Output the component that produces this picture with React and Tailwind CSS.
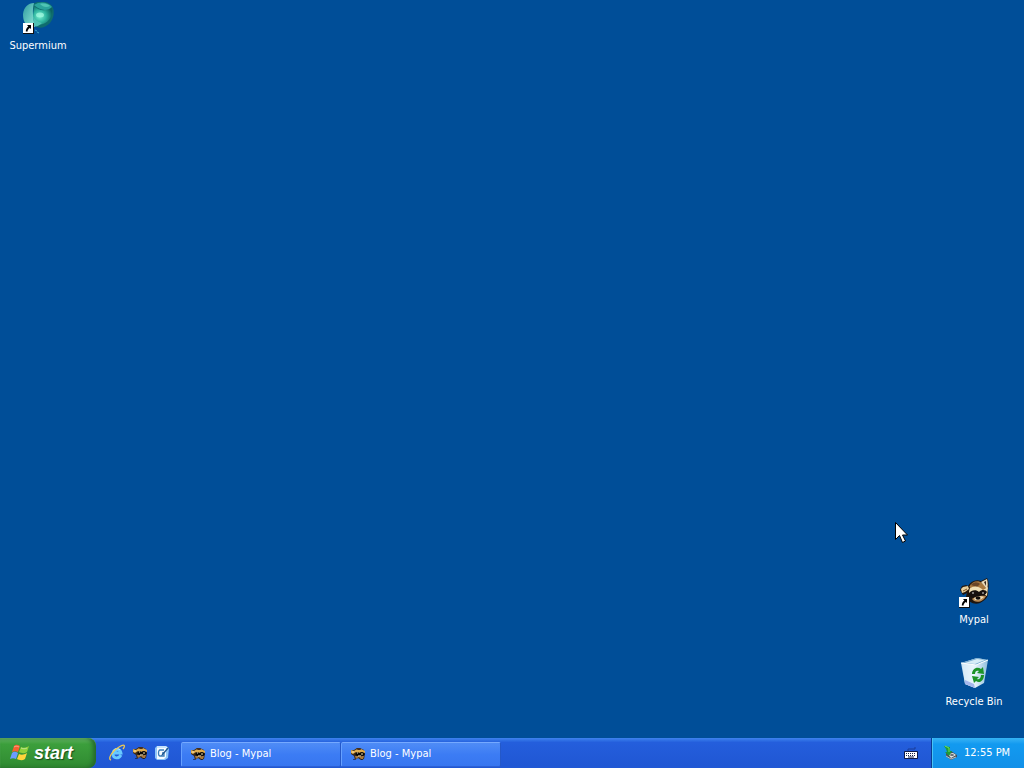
import React from "react";

function ShortcutBadge() {
  return (
    <svg className="absolute bottom-0 left-px" width="11" height="11" viewBox="0 0 11 11" aria-hidden="true">
      <rect width="11" height="11" fill="#111" />
      <rect width="10" height="10" fill="#fff" />
      <path d="M4 2h4v4L6.8 4.9C5.2 6 4.6 7 4.6 8.5H2.8C2.7 6.500 3.600 4.800 5.300 3.400Z" fill="#000" />
    </svg>
  );
}

function SupermiumIcon() {
  return (
    <svg width="32" height="32" viewBox="0 0 32 32" aria-hidden="true">
      <defs>
        <radialGradient id="orb" cx="35%" cy="55%" r="65%">
          <stop offset="0" stopColor="#7df0d2" />
          <stop offset="0.5" stopColor="#2fb5a0" />
          <stop offset="1" stopColor="#0b6462" />
        </radialGradient>
        <linearGradient id="wing" x1="0" y1="0" x2="1" y2="1">
          <stop offset="0" stopColor="#2f9aa0" />
          <stop offset="1" stopColor="#8fe9d8" />
        </linearGradient>
      </defs>
      <path d="M11 2C17-2 26-1 30 4C33 9 32 16 28 21C23 26 17 27 13 24Z" fill="#0f6d6e" />
      <path d="M1 12C2 5 6 1 12 1C10 8 11 16 13 24C12 26 9 26 6 24C2 21 1 17 1 12Z" fill="url(#wing)" />
      <path d="M12 4C17 9 24 10 30 5C32 13 27 20 21 22C15 24 12 21 11 14Z" fill="url(#orb)" />
      <path d="M12 3C18-1 26 0 30 5C25 10 17 8 12 3Z" fill="#2aa39c" />
      <path d="M18 2c4-1 8 0 10 2c-4 2-7 1-10-2Z" fill="#4fc4b4" />
      <path d="M11 14c2 4 5 6 9 7c-3 3-6 4-8 3Z" fill="#4fc1b4" />
      <ellipse cx="18" cy="13" rx="4" ry="2.500" fill="#a5fbe3" opacity="0.700" />
      <path d="M13 28l2 1M15 30l2 1" stroke="#3fa4c8" strokeWidth="1" />
    </svg>
  );
}

function RaccoonIcon() {
  return (
    <svg width="32" height="32" viewBox="0 0 32 32" aria-hidden="true">
      <path d="M10 10C13 5 18 3 23 5L29 2C31 5 31 10 30 15C31 20 28 24 22 27C16 29 10 26 8 21Z" fill="#1f150e" />
      <path d="M11 11C14 5 20 4 24 7L29 12C27 15 23 16 17 16L10 16Z" fill="#a8783f" />
      <path d="M13 9C16 5 20 6 22 8L19 11Z" fill="#6a4526" />
      <path d="M23 6l6-3c1 4 1 7 0 10Z" fill="#eadbbb" />
      <path d="M26 6l2-1v5Z" fill="#39291c" />
      <path d="M11 13C16 9 21 10 25 14L30 11L29 20C23 16 16 15 11 18Z" fill="#f0dfb4" />
      <path d="M10 18C13 14 18 13 21 16C24 13 28 14 29 16C27 20 24 21 20 20C16 22 12 22 10 18Z" fill="#16100d" />
      <path d="M14 23c3-3 11-4 14-3c-2 5-8 7-12 5Z" fill="#b98a54" />
      <path d="M16 22c4-2 8-2 10-1c-3 3-6 3-9 3Z" fill="#f0dfb8" />
      <ellipse cx="20" cy="22" rx="2.500" ry="1.800" fill="#100c0a" />
      <circle cx="15" cy="17" r="0.800" fill="#fff" />
      <circle cx="25" cy="17" r="0.800" fill="#fff" />
      <path d="M2 14l2-4 4-1 4 2-1 5-6 3Z" fill="#22160d" />
      <path d="M3 13l2-2 5-1 1 3-4 3-3 1Z" fill="#e7cf9d" />
      <path d="M5 15l4-2" stroke="#7d5227" />
    </svg>
  );
}

function RecycleIcon() {
  return (
    <svg width="32" height="32" viewBox="0 0 32 32" aria-hidden="true">
      <defs>
        <linearGradient id="bin" x1="0" x2="1">
          <stop offset="0" stopColor="#b9d9ee" />
          <stop offset="0.450" stopColor="#f4fbff" />
          <stop offset="1" stopColor="#8fbddd" />
        </linearGradient>
      </defs>
      <path d="M3 5L19 0L30 2L26 25L17 30L7 26Z" fill="url(#bin)" />
      <path d="M3 5L19 0L30 2L18 7Z" fill="#79add2" />
      <path d="M7 5l12-4 8 1-10 4Z" fill="#d7edf7" />
      <path d="M4 5l14 2-1 23-10-4Z" fill="#e1f1fa" opacity="0.650" />
      <path d="M3 5l15 2L30 2" fill="none" stroke="#fff" />
      <path d="M7 22l9 4 1 4-10-4Z" fill="#a5b7ec" />
      <g fill="#1c9328">
        <path d="M14 16C14 11 19 8 23 11L25 9L26 16L19 15L21 13C19 12 17 13 17 16Z" />
        <path d="M26 17C26 22 22 26 18 23L16 25L14 18L21 19L19 21C21 22 23 20 23 17Z" />
      </g>
    </svg>
  );
}

function RaccoonMini() {
  return (
    <svg width="16" height="16" viewBox="0 0 16 16" aria-hidden="true">
      <path d="M1 4l3 0 3-2h3l4 2 1 4-1 5-3 1-3-2-3 2-1-4-3-2Z" fill="#3a2a1a" />
      <path d="M1 4l3 1 3-2h4l4 2v2l-3-1-3 1-3-1-3 2-2-1Z" fill="#e0ac4c" />
      <path d="M6 3l2-1 2 0 1 2-3 0Z" fill="#49301d" />
      <path d="M5 8l3-2 1 1 3-1 3 2-2 2-3-1-3 1Z" fill="#080706" />
      <path d="M5 10l3 0 2 1 2-1 2 0-1 3-2 0-2-2-3 2Z" fill="#a8793f" />
      <path d="M2 6l2 0M7 7h1M11 8h2M8 10h3" stroke="#f5e2b0" />
      <path d="M4 13v1M12 13v1" stroke="#0c0a08" />
    </svg>
  );
}

function WindowsLogo() {
  return (
    <svg width="20" height="20" viewBox="0 0 20 20" aria-hidden="true">
      <path d="M4 3C6 1 8 2 10 3L8 9C6 8 4 8 2 9Z" fill="#f66030" />
      <path d="M11 4C13 5 16 5 19 3L17 9C14 11 11 10 9 9Z" fill="#8fd03a" />
      <path d="M2 10C4 8 6 9 8 10L6 16C4 15 2 15 0 16Z" fill="#6a9cff" />
      <path d="M9 11C11 12 14 12 17 10L15 16C12 18 9 17 7 16Z" fill="#ffd43b" />
      <path d="M4 4c2-1 3-1 5 0M11 5c2 1 4 1 6 0" fill="none" stroke="#fff" opacity="0.400" />
    </svg>
  );
}

function ExplorerIcon() {
  return (
    <svg width="18" height="18" viewBox="0 0 18 18" aria-hidden="true">
      <path d="M13 11C11 15 5 15 5 10C5 5 12 4 13 9H6" fill="none" stroke="#69caff" strokeWidth="2.800" />
      <path d="M5 7c2-3 5-3 7-1" fill="none" stroke="#c4f0ff" />
      <path d="M3 16C-1 15 5 6 11 3C16 0 18 1 15 5" fill="none" stroke="#f1ca50" strokeWidth="1.300" />
    </svg>
  );
}

function ShowDesktopIcon() {
  return (
    <svg width="16" height="16" viewBox="0 0 16 16" aria-hidden="true">
      <path d="M3 1h9l3 2-1 10-3 2H3l-2-2V3Z" fill="#8fc6f8" />
      <path d="M3 3h9v9l-2 2H3Z" fill="#f6fbff" />
      <path d="M3 2h9l2 1" fill="none" stroke="#fff" />
      <path d="M10 5H6C4 5 4 11 6 11h4V8H8" fill="none" stroke="#397db9" strokeWidth="1.300" />
      <path d="M8 9l6-7 1 1-6 7-2 1Z" fill="#1f568f" />
    </svg>
  );
}

function KeyboardIcon() {
  return (
    <svg width="14" height="14" viewBox="0 0 14 14" aria-hidden="true">
      <path d="M4 4V2h7V0" fill="none" stroke="#1a3d99" />
      <rect y="4" width="14" height="8" rx="1" fill="#101b48" />
      <rect x="1" y="5" width="12" height="6" fill="#fff" />
      <path d="M2 6.500h10M2 8.500h10" stroke="#18234b" strokeDasharray="1 1" />
      <path d="M4 10h6" stroke="#18234b" />
    </svg>
  );
}

function HardwareIcon() {
  return (
    <svg width="16" height="16" viewBox="0 0 16 16" aria-hidden="true">
      <path d="M4 8l5-2 6 4v2l-6 3-5-4Z" fill="#48525a" />
      <path d="M6 9l5-1 3 2-5 3Z" fill="#e3e7e4" />
      <path d="M4 11l5 3 5-2" fill="none" stroke="#b8bfc2" />
      <ellipse cx="10" cy="10" rx="2" ry="1" fill="#5f6870" />
      <path d="M2 1l6 1v4l2 0-3 5-4-4 2 0-1-3Z" fill="#1d9a3a" />
      <path d="M3 1l4 2v4" fill="none" stroke="#6ee05f" />
    </svg>
  );
}

function DesktopIcon({ label, children, shortcut }) {
  return (
    <button className="flex w-19 cursor-default flex-col items-center gap-1 text-[11px] leading-4 text-white">
      <span className="relative">
        {children}
        {shortcut && <ShortcutBadge />}
      </span>
      <span>{label}</span>
    </button>
  );
}

function TaskButton({ label }) {
  return (
    <button className="flex h-[25px] min-w-0 max-w-40 flex-1 items-center gap-1 rounded-[2px] border border-t-[#75a9ff] border-r-[#2458c8] border-b-[#2c60d5] border-l-[#66a0ff] bg-linear-to-b from-[#4f8cf6] via-[#3c7cf4] to-[#3776f0] pl-2 text-left text-[11px] text-white">
      <span className="shrink-0"><RaccoonMini /></span>
      <span className="truncate">{label}</span>
    </button>
  );
}

export default function App() {
  return (
    <div className="flex h-screen cursor-default flex-col overflow-hidden bg-[#004e98] font-['DejaVu_Sans_Condensed','Noto_Sans',sans-serif] select-none">
      <main className="relative flex flex-1 items-start justify-between pt-0.5 pr-3">
        <DesktopIcon label="Supermium" shortcut><SupermiumIcon /></DesktopIcon>
        <div className="flex flex-col gap-[30px] self-end pb-7">
          <DesktopIcon label="Mypal" shortcut><RaccoonIcon /></DesktopIcon>
          <DesktopIcon label="Recycle Bin"><RecycleIcon /></DesktopIcon>
        </div>
        <svg className="absolute right-[116px] bottom-[194px]" width="13" height="22" viewBox="0 0 13 22" aria-hidden="true">
          <path d="M.5.5v17l4-4 3 7 3-1.500-3-6h5Z" fill="#fff" stroke="#000" />
        </svg>
      </main>

      <footer className="flex h-[30px] items-stretch bg-linear-to-b from-[#3e83ee] from-0% via-[#245edc] via-15% to-[#2057d4] to-90%">
        <button className="flex w-24 shrink-0 items-center gap-1 rounded-r-lg bg-linear-to-b from-[#65b765] from-0% via-[#3c9f3c] via-20% to-[#2f8a31] to-100% pl-2.5 font-['Liberation_Sans',sans-serif] text-lg font-bold text-white italic shadow-[inset_-3px_0_4px_#24682b,inset_0_1px_1px_#7bc77a] [text-shadow:1px_1px_1px_#164b1a]">
          <WindowsLogo />
          <span>start</span>
        </button>
        <nav aria-label="Quick Launch" className="flex w-[85px] shrink-0 items-center gap-1.5 pl-3">
          <button aria-label="Internet Explorer"><ExplorerIcon /></button>
          <button aria-label="Mypal"><RaccoonMini /></button>
          <button aria-label="Show Desktop"><ShowDesktopIcon /></button>
        </nav>
        <div className="flex min-w-0 flex-1 items-center pt-0.5">
          <TaskButton label="Blog - Mypal" />
          <TaskButton label="Blog - Mypal" />
        </div>
        <button aria-label="Keyboard" className="flex w-10 shrink-0 items-center justify-center pt-0.5"><KeyboardIcon /></button>
        <div className="flex w-[93px] shrink-0 items-center gap-1.5 border-l border-[#0a3c91] bg-linear-to-b from-[#35b3f4] from-0% via-[#129af0] via-20% to-[#1290e8] to-100% pl-2.5 text-[11px] whitespace-nowrap text-white shadow-[inset_1px_0_0_#49c4f5]">
          <HardwareIcon />
          <time>12:55 PM</time>
        </div>
      </footer>
    </div>
  );
}
